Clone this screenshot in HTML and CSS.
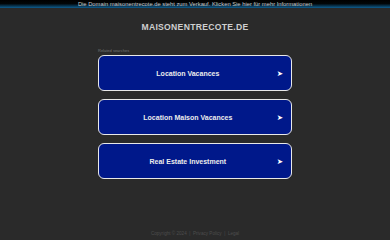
FILE: index.html
```html
<!DOCTYPE html>
<html lang="de">
<head>
<meta charset="utf-8">
<title>maisonentrecote.de</title>
<link rel="stylesheet" href="styles.css">
</head>
<body>
<div class="topbar">Die Domain maisonentrecote.de steht zum Verkauf. Klicken Sie hier für mehr Informationen</div>
<main class="page">
  <h1 class="title">MAISONENTRECOTE.DE</h1>
  <section class="searches">
    <div class="label">Related searches</div>
    <a class="btn" href="#"><span class="btn-text">Location Vacances</span><span class="arrow">&#x27A4;</span></a>
    <a class="btn" href="#"><span class="btn-text">Location Maison Vacances</span><span class="arrow">&#x27A4;</span></a>
    <a class="btn" href="#"><span class="btn-text">Real Estate Investment</span><span class="arrow">&#x27A4;</span></a>
  </section>
</main>
<footer class="footer">Copyright &copy; 2024 &nbsp;|&nbsp; Privacy Policy &nbsp;|&nbsp; Legal</footer>
</body>
</html>
```
FILE: styles.css
```css
html, body {
  margin: 0;
  padding: 0;
}
body {
  background: #2a2a2a;
  font-family: "Liberation Sans", Arial, sans-serif;
  height: 240px;
  display: flex;
  flex-direction: column;
  overflow: hidden;
}
.topbar {
  height: 8px;
  line-height: 8px;
  font-size: 5.8px;
  text-align: center;
  color: #c8c8c8;
  background: linear-gradient(#000 0%, #020608 45%, #0e5d8e 100%);
  white-space: nowrap;
}
.page {
  flex: 1;
  display: flex;
  flex-direction: column;
  align-items: center;
}
.title {
  margin: 14px 0 0;
  font-size: 8.6px;
  line-height: 11px;
  font-weight: bold;
  letter-spacing: 0.3px;
  color: #cfcfcf;
}
.searches {
  width: 194px;
  margin-top: 15px;
  display: flex;
  flex-direction: column;
  gap: 8px;
}
.label {
  font-size: 4px;
  line-height: 6px;
  color: #777;
  margin-bottom: -7px;
}
.btn {
  height: 34px;
  box-sizing: content-box;
  border: 1px solid #e8e8e8;
  border-radius: 6px;
  background: #00188a;
  display: flex;
  align-items: center;
  padding: 0 8px 0 0;
  text-decoration: none;
  color: #ececec;
}
.btn-text {
  flex: 1;
  text-align: center;
  font-size: 7px;
  font-weight: bold;
}
.arrow {
  font-size: 7.5px;
  color: #fff;
  font-family: "DejaVu Sans", sans-serif;
}
.footer {
  text-align: center;
  font-size: 4.6px;
  line-height: 6px;
  color: #4d4d4d;
  padding-bottom: 3px;
}
```
